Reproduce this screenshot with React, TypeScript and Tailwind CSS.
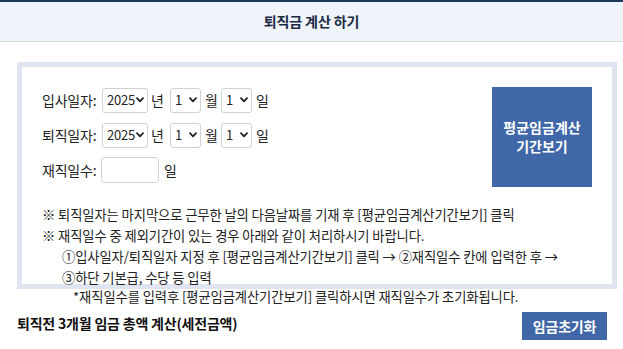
import React from 'react';

const FONT = { fontFamily: '"Noto Sans CJK KR", "Noto Sans", sans-serif' };

const Chevron: React.FC = () => (
  <svg className="pointer-events-none absolute right-[4px] top-1/2 -translate-y-1/2" width="8" height="6" viewBox="0 0 8 6">
    <path d="M1 1.2 L4 4.4 L7 1.2" fill="none" stroke="#222" strokeWidth="1.8" strokeLinecap="round" strokeLinejoin="round" />
  </svg>
);

interface DateSelectProps {
  value: string;
  options: string[];
  width: string;
}

const DateSelect: React.FC<DateSelectProps> = ({ value, options, width }) => (
  <div className={`relative h-[25px] ${width}`}>
    <select
      defaultValue={value}
      className="h-full w-full appearance-none rounded-[3px] border border-[#d2d2d2] bg-white pl-[4px] text-[13px] text-[#222] outline-none"
    >
      {options.map((o) => (
        <option key={o} value={o}>
          {o}
        </option>
      ))}
    </select>
    <Chevron />
  </div>
);

const years = ['2023', '2024', '2025'];
const months = Array.from({ length: 12 }, (_, i) => String(i + 1));
const days = Array.from({ length: 31 }, (_, i) => String(i + 1));

const DateRow: React.FC<{ label: string }> = ({ label }) => (
  <div className="flex h-[26px] items-center text-[14px] tracking-[-0.2px] text-[#222]">
    <span className="w-[60px]">{label}</span>
    <DateSelect value="2025" options={years} width="w-[46px]" />
    <span className="ml-[3px] w-[19px]">년</span>
    <DateSelect value="1" options={months} width="w-[31px]" />
    <span className="ml-[4px] w-[16px]">월</span>
    <DateSelect value="1" options={days} width="w-[31px]" />
    <span className="ml-[4px]">일</span>
  </div>
);

export default function App() {
  return (
    <div className="h-[349px] w-[623px] overflow-hidden bg-white" style={FONT}>
      {/* header */}
      <div className="flex h-[42px] items-center justify-center border-t-2 border-b border-t-[#1d3557] border-b-[#d6dae2] bg-[#eff3fa]">
        <h1 className="text-[14px] font-bold tracking-[-0.1px] text-[#1b2a44]">퇴직금 계산 하기</h1>
      </div>

      <div className="px-[17px] pt-[20px]">
        {/* input box */}
        <div className="h-[227px] w-[600px] border-[5px] border-[#dfe4f0] px-[20px] pt-[20px]">
          <div className="flex justify-between">
            <div className="flex flex-col gap-[9px]">
              <DateRow label="입사일자:" />
              <DateRow label="퇴직일자:" />
              <div className="flex h-[26px] items-center text-[14px] tracking-[-0.2px] text-[#222]">
                <span className="w-[59px]">재직일수:</span>
                <input className="h-[26px] w-[58px] rounded-[3px] border border-[#d2d2d2] bg-white px-1 text-[13px] outline-none" />
                <span className="ml-[5px]">일</span>
              </div>
            </div>
            <button className="flex h-[100px] w-[100px] flex-col items-center justify-center bg-[#4067a8] text-[14px] font-bold leading-[19px] text-white">
              <span>평균임금계산</span>
              <span>기간보기</span>
            </button>
          </div>

          <div className="mt-[17px] text-[13.3px] leading-[21px] tracking-[-0.1px] text-[#222]">
            <p>※ 퇴직일자는 마지막으로 근무한 날의 다음날짜를 기재 후 [평균임금계산기간보기] 클릭</p>
            <p>※ 재직일수 중 제외기간이 있는 경우 아래와 같이 처리하시기 바랍니다.</p>
            <p className="pl-[20px]">①입사일자/퇴직일자 지정 후 [평균임금계산기간보기] 클릭 → ②재직일수 칸에 입력한 후 →</p>
            <p className="pl-[20px]">③하단 기본급, 수당 등 입력</p>
          </div>
        </div>

        <p className="-mt-[3px] pl-[56px] text-[13.3px] leading-[21px] tracking-[-0.1px] text-[#222]">
          *재직일수를 입력후 [평균임금계산기간보기] 클릭하시면 재직일수가 초기화됩니다.
        </p>

        <div className="mt-[5px] flex items-center justify-between">
          <h2 className="pb-[5px] text-[14px] font-bold tracking-[-0.2px] text-[#111]">퇴직전 3개월 임금 총액 계산(세전금액)</h2>
          <button className="mr-[-1px] h-[28px] w-[85px] bg-[#4067a8] text-[14px] font-bold tracking-[-0.2px] text-white">
            임금초기화
          </button>
        </div>
      </div>
    </div>
  );
}
